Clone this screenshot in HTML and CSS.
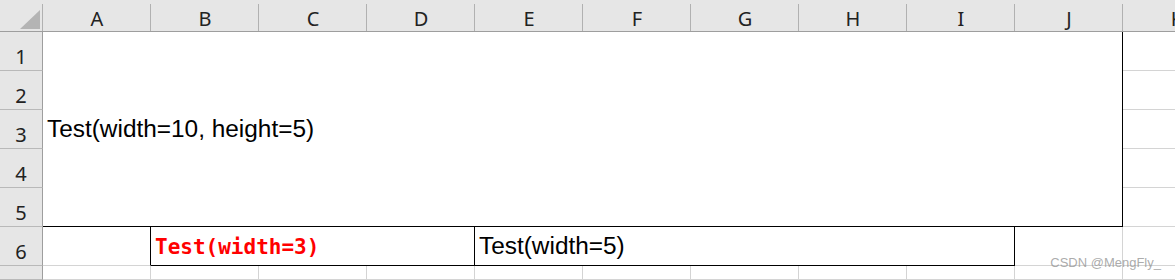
FILE: index.html
```html
<!DOCTYPE html>
<html lang="en">
<head>
    <meta charset="UTF-8" />
    <title>Sheet1</title>
    <link rel="stylesheet" href="styles.css">
</head>
<body>
    <div class="sheet">
        <div class="corner">
            <svg width="20" height="19" viewBox="0 0 20 19"><polygon points="0,19 20,19 20,0" fill="#b4b4b4"/></svg>
        </div>
        <div class="col-head">A</div>
        <div class="col-head">B</div>
        <div class="col-head">C</div>
        <div class="col-head">D</div>
        <div class="col-head">E</div>
        <div class="col-head">F</div>
        <div class="col-head">G</div>
        <div class="col-head">H</div>
        <div class="col-head">I</div>
        <div class="col-head">J</div>
        <div class="col-head">K</div>

        <div class="row-head">1</div>
        <div class="cell big">Test(width=10, height=5)</div>
        <div class="cell"></div>
        <div class="row-head">2</div>
        <div class="cell"></div>
        <div class="row-head">3</div>
        <div class="cell"></div>
        <div class="row-head">4</div>
        <div class="cell"></div>
        <div class="row-head">5</div>
        <div class="cell"></div>

        <div class="row-head">6</div>
        <div class="cell edge"></div>
        <div class="cell boxed span-3 red">Test(width=3)</div>
        <div class="cell boxed span-5">Test(width=5)</div>
        <div class="cell"></div>
        <div class="cell"></div>

        <!-- row 7, only its top edge is in view -->
        <div class="row-head"></div>
        <div class="cell"></div>
        <div class="cell"></div>
        <div class="cell"></div>
        <div class="cell"></div>
        <div class="cell"></div>
        <div class="cell"></div>
        <div class="cell"></div>
        <div class="cell"></div>
        <div class="cell"></div>
        <div class="cell"></div>
        <div class="cell"></div>
    </div>
    <div class="watermark">CSDN @MengFly_</div>
</body>
</html>
```

FILE: styles.css
```css
body {
    margin: 0;
    width: 1175px;
    height: 280px;
    overflow: hidden;
    background: #fff;
    position: relative;
    font-family: "Liberation Sans", Arial, sans-serif;
}

.sheet {
    display: grid;
    grid-template-columns: 43px repeat(11, 108px);
    grid-template-rows: 32px repeat(6, 39px) 14px;
}

/* header strip */
.corner,
.col-head {
    box-sizing: border-box;
    background: #e6e6e6 linear-gradient(#b1b1b1, #b1b1b1) no-repeat right bottom / 1px calc(100% - 4px);
    border-bottom: 1px solid #9e9e9e;
}

.corner {
    display: flex;
    justify-content: flex-end;
    align-items: flex-end;
    padding: 0 3px 2px 0;
}

.corner svg {
    display: block;
}

.col-head,
.row-head {
    display: flex;
    justify-content: center;
    align-items: flex-end;
    font-family: "Noto Sans", sans-serif;
    font-size: 20px;
    line-height: 20px;
    color: #222;
}

.col-head {
    padding-bottom: 2px;
}

.row-head {
    box-sizing: border-box;
    background: #e6e6e6;
    border-right: 1px solid #9e9e9e;
    border-bottom: 1px solid #b9b9b9;
    padding-bottom: 3px;
}

/* cells */
.cell {
    box-sizing: border-box;
    border-right: 1px solid #d4d4d4;
    border-bottom: 1px solid #d4d4d4;
    display: flex;
    align-items: center;
    padding-left: 4px;
    font-size: 24.4px;
    color: #000;
    white-space: nowrap;
}

.big {
    grid-row: 2 / span 5;
    grid-column: 2 / span 10;
    border-right-color: #000;
    border-bottom-color: #000;
}

.edge {
    border-right-color: #000;
}

.boxed {
    border-right-color: #000;
    border-bottom-color: #000;
}

.span-3 {
    grid-column: span 3;
}

.span-5 {
    grid-column: span 5;
}

.red {
    color: #ff0000;
    font-family: "DejaVu Sans Mono", monospace;
    font-weight: bold;
    font-size: 21px;
    padding-top: 2px;
}

.watermark {
    position: absolute;
    right: 14px;
    top: 255px;
    font-size: 13px;
    line-height: 15px;
    color: rgba(150, 150, 150, 0.8);
}
```
